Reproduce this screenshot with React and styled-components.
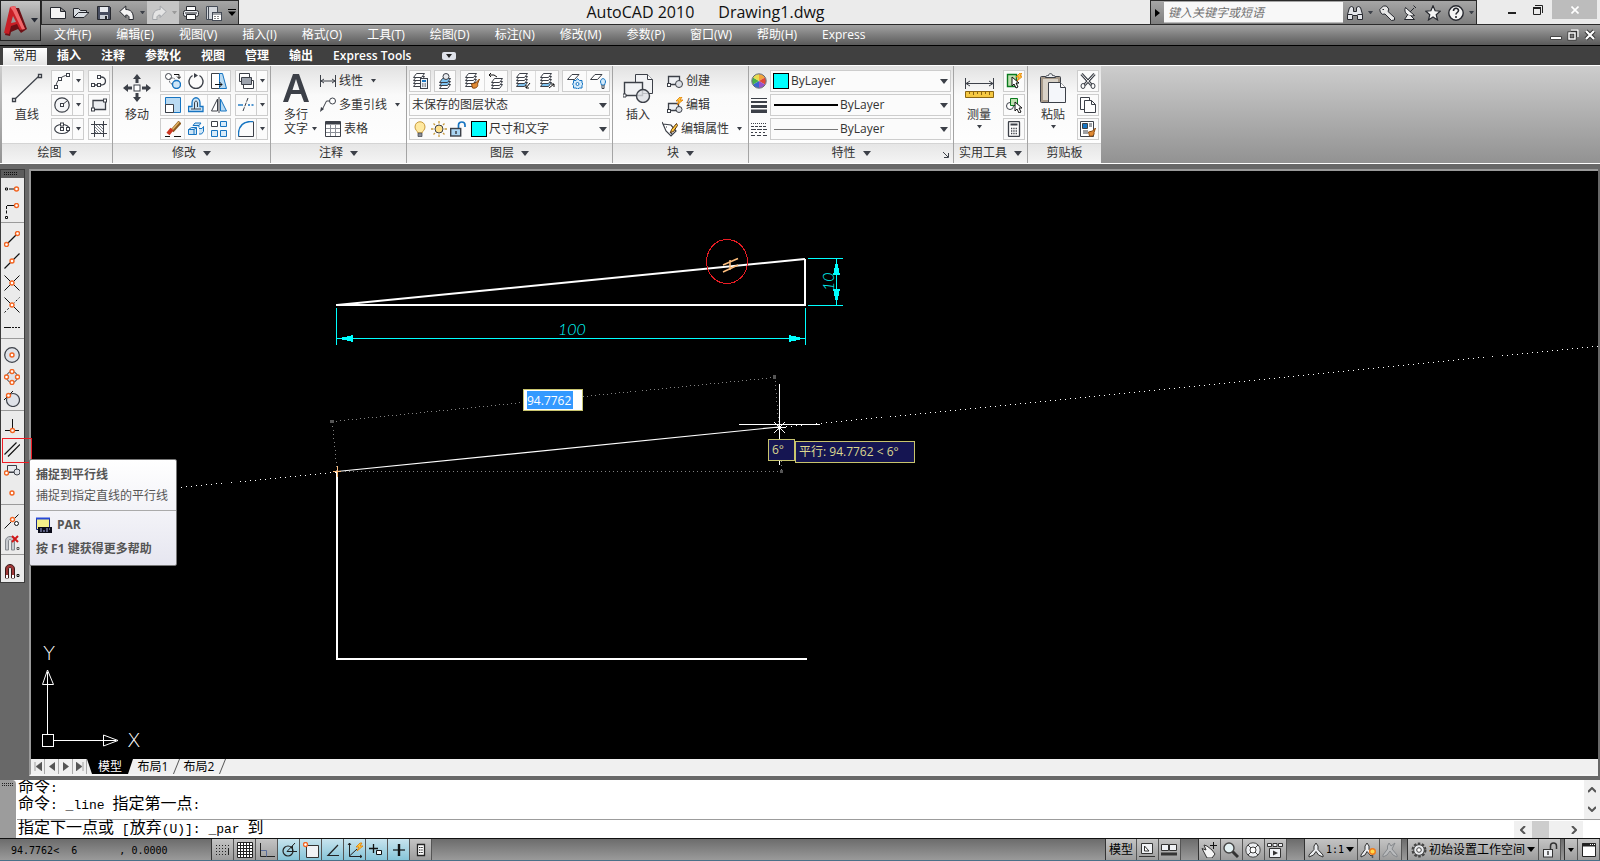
import * as React from "react"
import styled, { ThemeProvider, createGlobalStyle, css } from "styled-components";

const theme = {
    ink: '#3c4048',
    blue: '#1674c1',
    orange: '#f26522',
    cyan: '#00ffff',
    frame: '#686868',
    tip: '#151552',
    tipLine: '#c8c46e',
    ui: '"Open Sans", "Noto Sans CJK SC", sans-serif',
    mono: '"Liberation Mono", "Noto Sans CJK SC", monospace',
}

const INK = theme.ink
const BLUE = theme.blue
const ORANGE = theme.orange
const CYAN = theme.cyan

const GlobalStyle = createGlobalStyle`
    * {
        box-sizing: border-box;
    }

    body {
        margin: 0;
        background: #686868;
        font-family: ${theme.ui};
        font-size: 12px;
        line-height: 16px;
        color: #333;
    }

    button, input, select {
        margin: 0;
        padding: 0;
        border: 0;
        background: none;
        font: inherit;
        color: inherit;
    }

    svg {
        display: block;
        flex: none;
    }
`;

const sheet = (x, y, fill = '#fff') => (
    <path d={`M${x + 3.5} ${y - 0.5}h8l-3 4h-8z`} fill={fill} stroke={INK} />
)

const layers = (fill) => (
    <>
        {sheet(1, 10, fill)}
        {sheet(1, 7)}
        {sheet(1, 4)}
        {sheet(1, 1)}
    </>
)

const node = (x, y) => <circle cx={x} cy={y} r="2" fill="#fff" stroke={ORANGE} strokeWidth="1.4" />
const grip = (x, y) => <rect x={x - 1.5} y={y - 1.5} width="3" height="3" fill="#fff" stroke={INK} />
const cursor = (x, y) => <path d={`M${x} ${y}v9l2-2 2 4 2-1-2-4h3z`} fill="#fff" stroke="#111" />
const bolt = (x, y) => <path d={`M${x + 4} ${y}l-4 4h3l-2 4 6-5h-3l2-3z`} fill="#ffc83c" stroke="#e07800" strokeWidth=".8" />

const icons = {
    // quick access
    fresh: <path d="M.5 2.500h10l5 4v7h-15zM10.500 2.500v4h5" fill="#f4f4f4" stroke="#26282e" />,
    open: <path d="M.5 12.500v-9h5l2 2h6v2h2.500l-5 5zM.5 12.500l5-5h10" fill="#d9dde2" stroke="#26282e" />,
    save: <><path d="M1.500 1.500h12l1 1v12h-13z" fill="#474d60" stroke="#26282e" /><path d="M4 2h8v5H4z" fill="#e8ebf0" /><path d="M4 10h8v4H4z" fill="#c9ced6" /><path d="M9 11h2v3H9z" fill="#26282e" /></>,
    undo: <path d="M.8 6.500l6-5.500v3.500c5 0 8 3 7.500 10h-4.500c1-3-.5-4.500-3-4.500v2.500z" fill="#f4f4f4" stroke="#26282e" />,
    redo: <path d="M15.200 6.500l-6-5.500v3.500c-5 0-8 3-7.500 10h4.500c-1-3 .5-4.500 3-4.500v2.500z" fill="#e4e4e4" stroke="#a3a6aa" />,
    print: <><path d="M3.500 6.500v-5h9v5" fill="#fff" stroke="#26282e" /><rect x=".5" y="5.500" width="15" height="6" rx="2" fill="#e8eaee" stroke="#26282e" /><path d="M3.500 9.500h9v5h-9z" fill="#fff" stroke="#26282e" /><path d="M2 8h12" stroke="#26282e" /></>,
    publish: <><path d="M.5 1.500h11v13H.5z" fill="#d4d7dc" stroke="#444a55" /><path d="M2.500 1.500v13" stroke="#444a55" /><rect x="6.500" y="7.500" width="9" height="8" fill="#fff" stroke="#444a55" /><path d="M7 9h8" stroke="#444a55" /><path d="M8 11.500h6M8 13.500h6" stroke="#888" strokeDasharray="2 1" /></>,
    binoculars: <path d="M2.500 2.500l2-1 2 1v4h3v-4l2-1 2 1 2 7v5h-5v-4h-5v4h-5v-5zM.5 9.500h5M10.500 9.500h5" fill="#e4e6ea" stroke="#26282e" />,
    key: <path d="M.8 4.500l3.500-3.500h3l2.500 3-.8 2.500 6.500 6v2.500l-3 .5-6.500-6.500-2.700.3-2-2.300zM3.500 4.500h1.500" fill="#e6e6e6" stroke="#26282e" />,
    dish: <><path d="M3.500 2.500c-2.500 5 3 10 9 8zM8 7l4-4M11.500 .5l2.500 2.500" fill="#f0f0f0" stroke="#26282e" /><path d="M5.500 10l-3 4.500h10l-4-4" fill="#f0f0f0" stroke="#26282e" /></>,
    star: <path d="M8 .8l2.100 5 5.100.4-4 3.500 1.300 5.200L8 12l-4.500 2.900 1.300-5.200-4-3.500 5.100-.4z" fill="#f4f4f4" stroke="#26282e" strokeWidth="1.200" />,
    help: <><circle cx="8" cy="8" r="7.200" fill="#f4f4f4" stroke="#26282e" strokeWidth="1.400" /><path d="M5.500 6c0-3.500 5-3.500 5-.5 0 2-2.500 2-2.500 4M8 11v2" fill="none" stroke="#26282e" strokeWidth="1.600" /></>,

    // draw
    line: <><path d="M3 28L28 4" stroke={INK} strokeWidth="1.200" /><path d="M1.500 26.500h3v3h-3zM27.500 2.500h3v3h-3z" fill="#fff" stroke={INK} strokeWidth="1.300" /></>,
    arc: <><path d="M2 14C2 8 7 3 14 2" fill="none" stroke={INK} />{grip(2, 14)}{grip(6, 6)}{grip(14, 2)}</>,
    pline: <><path d="M2 12h8c6 0 6-8 0-8H9" fill="none" stroke={INK} strokeWidth="1.300" />{grip(2, 12)}{grip(8, 12)}{grip(8, 4)}</>,
    circle: <><circle cx="8" cy="8" r="7.200" fill="#f4f5f7" stroke={INK} strokeWidth="1.200" /><path d="M8 8l5-4" stroke={INK} />{grip(8, 8)}</>,
    rect: <><path d="M2 3.500h12.500v9H2z" fill="#eceef1" stroke={INK} strokeWidth="1.300" />{grip(2, 12.5)}{grip(14, 3.5)}</>,
    ellipse: <><ellipse cx="8" cy="8" rx="7.300" ry="4.500" fill="#fff" stroke={INK} strokeWidth="1.200" />{grip(8, 8)}{grip(8, 3.5)}{grip(14, 8)}</>,
    hatch: <><path d="M3.500 0v16M12.500 0v16M0 3.500h16M0 12.500h16" stroke={INK} /><path d="M4 6l6 6M4 9l3 3M5 4l7 7M8 4l4 4M4 11l1 1M11 4l1 1" stroke="#80848c" /></>,

    // modify
    move: <><path d="M15 1l4 5h-2.500v4h-3V6H11zM15 29l4-5h-2.500v-4h-3v4H11zM1 15l5-4v2.500h4v3H6V19zM29 15l-5-4v2.500h-4v3h4V19z" fill={INK} /><rect x="12" y="12" width="6" height="6" fill="#fff" stroke={INK} /></>,
    copy: <><circle cx="3.500" cy="3.500" r="3" fill="#fff" stroke={INK} /><circle cx="7.500" cy="8" r="3" fill="none" stroke={INK} strokeDasharray="1.500 1" /><circle cx="11.500" cy="11.500" r="4" fill="#cfe6f7" stroke={BLUE} strokeWidth="1.400" /><path d="M9 1.500h5v4M12 3.500l2 2 2-2" fill="none" stroke="#111" /></>,
    rotate: <><path d="M4.500 2.500a7 7 0 1 0 7 0" fill="none" stroke={INK} strokeWidth="1.400" /><path d="M6 0v5l4-2.500z" fill={INK} /></>,
    stretch: <><path d="M.5 .5h8v15h-8z" fill="#fff" stroke={INK} /><path d="M8.500 .5h3l4 15h-7z" fill="#b9daf2" stroke={BLUE} /><path d="M4 11.500h7M8.500 9l2.500 2.500L8.500 14" fill="none" stroke="#111" /></>,
    scale: <><path d="M.5 .5h15v15H.5z" fill="#b9daf2" stroke={BLUE} /><path d="M.5 7.500h8v8h-8z" fill="#fff" stroke={INK} /></>,
    offset: <><path d="M.5 14.500h14.500v-5h-3V6c0-7-8-7-8 0v3.500h-3.500z" fill="#cfe6f7" stroke={BLUE} strokeWidth="1.300" /><path d="M3 12h10M6.500 12V6c0-2.500 3-2.500 3 0v4" fill="none" stroke={INK} /></>,
    mirror: <><path d="M6.500 2v12h-6z" fill="#fff" stroke={INK} /><path d="M9.500 2v12h6z" fill="#b9daf2" stroke={BLUE} /><path d="M8 0v16" stroke={INK} /></>,
    erase: <><path d="M15 1l-8 9" stroke="#8a5a20" strokeWidth="4" /><path d="M14 1l-7 8" stroke="#e0b060" strokeWidth="1.500" /><path d="M7 8L3 13" stroke="#cc3520" strokeWidth="4" /><path d="M0 15.500h5M9 15.500h7" stroke="#111" /></>,
    explode: <path d="M.5 8.500l3-2h5v7h-8zM.5 8.500h5.500v5M6 8.500l2.500-2M5 4.500l2-2.500h6l-2 2.500v2M5 4.500h6M11 7.500h3l1.500-2v5l-2 2.500h-2.500" fill="#cfe6f7" stroke={BLUE} />,
    array: <><path d="M.5 .5h6v5h-6z" fill="#fff" stroke={INK} /><path d="M9.500 .5h6v5h-6zM.5 9.500h6v6h-6zM9.500 9.500h6v6h-6z" fill="#d8ebf9" stroke={BLUE} /></>,
    order: <><path d="M1.500 .5h10v8h-10z" fill="#fff" stroke={INK} /><path d="M5.500 7.500h10v8h-10z" fill="#fff" stroke={INK} /><path d="M3.500 4.500h10v7h-10z" fill="#9da3ad" stroke={INK} /></>,
    trim: <><path d="M0 8h5" stroke={BLUE} strokeWidth="1.400" /><path d="M10 8h6" stroke={BLUE} strokeWidth="1.400" strokeDasharray="2 1.500" /><path d="M5 14L10 1" stroke={INK} strokeDasharray="4 1" /></>,
    fillet: <><path d="M.5 15.500V12C1 5 5 1 12 .5h3" fill="none" stroke={BLUE} strokeWidth="1.400" /><path d="M15.500 .5v15H.5" fill="none" stroke={INK} /></>,

    // annotation
    mtext: <path d="M0 28L10 0h6l10 28h-5l-3-8H8l-3 8zM9.500 16h7L13 5z" fill={INK} fillRule="evenodd" />,
    linear: <path d="M.5 2v12M15.500 2v12M1 8h14M4 6L1 8l3 2M12 6l3 2-3 2" fill="none" stroke={INK} />,
    leader: <><circle cx="12.500" cy="4" r="3" fill="#fff" stroke={INK} /><path d="M9.500 4H6.500L2 13" fill="none" stroke={INK} /><path d="M0 15l1-5 3 2z" fill={INK} /></>,
    table: <><path d="M.5 .5h15v15H.5z" fill="#fff" stroke={INK} /><path d="M1 2h14" stroke={INK} strokeWidth="3" /><path d="M1 7.500h14M1 11.500h14M5.500 4v11M10.500 4v11" stroke="#8a8e96" /></>,

    // layers
    layerProps: <>{layers()}<rect x="8.500" y="5.500" width="7" height="10" fill="#eef4fa" stroke={INK} /><path d="M10 8h4" stroke={BLUE} strokeWidth="2" /><path d="M10 11h4M10 13h4" stroke={INK} strokeDasharray="1 .5" /></>,
    layerMatch: <>{sheet(2, 12)}{sheet(2, 9, '#7fc3f0')}{sheet(2, 6, '#7fc3f0')}<circle cx="9" cy="3.500" r="3" fill="#e8eaee" stroke={INK} /></>,
    layerBrush: <>{layers()}<path d="M15.500 6l-4 4-4 1 1 4c4 1 6-2 5-4z" fill="#e08a34" stroke="#8a4a10" /></>,
    layerPrev: <>{sheet(3, 12)}{sheet(3, 9)}{sheet(3, 6)}<path d="M6 2H1M3 0L1 2l2 2M6 2l3 2" fill="none" stroke="#111" /></>,
    layerIso: <>{layers('#7fc3f0')}<path d="M15 10l-4 5M11 12v3h3" fill="none" stroke="#111" /></>,
    layerUniso: <>{layers('#7fc3f0')}<path d="M10 15l5-4M12 11h3v3" fill="none" stroke="#111" /></>,
    layerFreeze: <><path d="M.5 6.500h7l4.500-5H5z" fill="#fff" stroke={INK} /><path d="M10.500 5.500l2 2h2.500v2.500l1 1-1 1.500v2.500h-2.500l-2 1-1.500-1H6.500v-2.500l-1-1.500 1-1V7.500h2.500z" fill="#d4eafa" stroke={BLUE} /><circle cx="10.500" cy="11" r="1.500" fill="#fff" stroke={BLUE} /></>,
    layerOff: <><path d="M.5 6.500h7l4.500-5H5z" fill="#fff" stroke={INK} /><path d="M10.500 9c0-4.500 5-4.500 5 0 0 1-1 2-1 3h-3c0-1-1-2-1-3z" fill="#d4eafa" stroke={BLUE} /><path d="M12 12v3.500h2V12" fill="none" stroke={INK} /></>,
    bulb: <><path d="M3 6c0-7 10-7 10 0 0 3-2.500 4-3 6H6C5.500 10 3 9 3 6z" fill="#ffe9a0" stroke="#c89a3c" /><path d="M6 12h4v3.500H6z" fill="#8a8e96" stroke={INK} strokeWidth=".7" /></>,
    sun: <><circle cx="8" cy="8" r="4" fill="#ffe08a" stroke={INK} /><path d="M8 0v2.500M8 13.500V16M0 8h2.500M13.500 8H16M2.500 2.500L4 4M12 12l1.500 1.500M2.500 13.500L4 12M12 4l1.500-1.500" stroke="#c89a3c" strokeWidth="1.300" /></>,
    unlock: <><path d="M8.500 7V4c0-4 6.500-4 6.500 0v2" fill="none" stroke={BLUE} strokeWidth="1.700" /><rect x=".7" y="7.500" width="10" height="7.500" fill="#a9d4f2" stroke={INK} strokeWidth="1.400" /><path d="M6 10v3" stroke={INK} strokeWidth="1.500" /></>,

    // block
    insert: <><path d="M12.500 1.500h12l5 5v14h-17z" fill="#f2f3f5" stroke={INK} /><path d="M24.500 1.500v5h5" fill="#fff" stroke={INK} /><path d="M1.500 9.500h18v13h-18z" fill="#f2f3f5" stroke={INK} strokeWidth="1.400" /><circle cx="20" cy="23" r="6.500" fill="#dde0e5" fillOpacity=".8" stroke={INK} strokeWidth="1.400" /><path d="M0 21h3v3H0z" fill="#fff" stroke={INK} /></>,
    create: <><path d="M1.500 3.500h11v8h-11z" fill="#eef0f3" stroke={INK} strokeWidth="1.300" /><circle cx="12" cy="11" r="3.500" fill="#dde0e5" stroke={INK} />{grip(2, 12)}</>,
    edit: <><path d="M1.500 6.500h10v7h-10z" fill="#eef0f3" stroke={INK} strokeWidth="1.300" /><circle cx="12" cy="12.500" r="3" fill="#dde0e5" stroke={INK} />{bolt(9, 0)}{grip(2, 14)}</>,
    editAttr: <><path d="M1 3l8 1 5 6-5 5-5-5zM1 3L0 1M4 6h1M8 11l2 2" fill="#fff" stroke={INK} strokeWidth="1.200" /><path d="M14.500 2.500l-5 6-1 3 3-1 4-6z" fill="#ffc83c" stroke="#5a3410" /></>,

    // properties
    lweight: <><path d="M0 1.500h16" stroke={INK} /><path d="M0 5h16" stroke={INK} strokeWidth="2" /><path d="M0 9.500h16" stroke={INK} strokeWidth="3" /><path d="M0 14.500h16" stroke={INK} strokeWidth="4" /></>,
    ltype: <><path d="M0 2.500h16" stroke={INK} strokeDasharray="1 1" /><path d="M0 5.500h16" stroke={INK} strokeDasharray="3 1" /><path d="M0 8.500h16" stroke={INK} strokeDasharray="5 1" /><path d="M0 11.500h16" stroke={INK} strokeDasharray="2 2" /><path d="M0 14.500h16" stroke={INK} strokeDasharray="4 2" /></>,
    wheel: <><path d="M8 8L8 1A7 7 0 0 1 14 4.500z" fill="#f2a33c" /><path d="M8 8l6-3.500A7 7 0 0 1 14 11.500z" fill="#e04838" /><path d="M8 8l6 3.500A7 7 0 0 1 8 15z" fill="#9a50c8" /><path d="M8 8v7A7 7 0 0 1 2 11.500z" fill="#3a66d0" /><path d="M8 8l-6 3.500A7 7 0 0 1 2 4.500z" fill="#48b048" /><path d="M8 8L2 4.500A7 7 0 0 1 8 1z" fill="#e8dc50" /><circle cx="8" cy="8" r="7.200" fill="none" stroke="#666a72" /></>,

    // utilities
    measure: <><path d="M1.500 1v11M29.500 1v11M2 6.500h27M6 4L2 6.500 6 9M25 4l4 2.500L25 9" fill="none" stroke={INK} /><path d="M1.500 14.500h28v6h-28z" fill="#f5c842" stroke="#8a6410" /><path d="M5.500 15v2M9.500 15v3M13.500 15v2M17.500 15v3M21.500 15v2M25.500 15v3" stroke="#8a6410" /></>,
    quickSelect: <><path d="M1.500 1.500h9v12h-9z" fill="#bfe0b0" stroke="#0a7a1e" strokeWidth="1.400" />{bolt(10, 0)}{cursor(6, 4)}</>,
    selectAll: <><circle cx="4" cy="9" r="3.500" fill="#fff" stroke={INK} /><path d="M4.500 1.500h7v7h-7z" fill="#bfe0b0" stroke="#0a7a1e" />{cursor(9, 5)}</>,
    calc: <><rect x="2.500" y=".5" width="11" height="15" rx="1" fill="#fff" stroke={INK} strokeWidth="1.300" /><path d="M4.500 3.500h7" stroke={INK} strokeWidth="2" /><path d="M5 7.500h6M5 10h6M5 12.500h6" stroke={INK} strokeWidth="1.300" strokeDasharray="1.300 1" /></>,

    // clipboard
    paste: <><rect x="2.500" y="3.500" width="20" height="26" rx="1" fill="#a79a8a" stroke={INK} /><path d="M5 6h15v21H5z" fill="#d8d2c8" /><path d="M7.500 4.500c0-2 2-2 3-2 0-2.500 4-2.500 4 0 1 0 3 0 3 2z" fill="#eceef1" stroke={INK} /><path d="M10.500 9.500h12l5 5v15h-17z" fill="#f4f6fa" stroke={INK} /><path d="M22.500 9.500v5h5" fill="#fff" stroke={INK} /></>,
    cut: <><path d="M1.500 1l10 11M14.500 1l-10 11" stroke={INK} strokeWidth="3" /><path d="M1.500 1l10 11M14.500 1l-10 11" stroke="#f4f4f4" /><ellipse cx="3" cy="13" rx="2" ry="2.500" fill="#fff" stroke={INK} /><ellipse cx="13" cy="13" rx="2" ry="2.500" fill="#fff" stroke={INK} /></>,
    copyClip: <><path d="M.5 .5h9v12h-9z" fill="#fff" stroke={INK} /><path d="M4.500 3.500h7l4 4v8h-11zM11.500 3.500v4h4" fill="#fff" stroke={INK} /></>,
    matchProp: <><path d="M.5 .5h13v15H.5z" fill="#fff" stroke={INK} /><path d="M2.500 2.500h5v5h-5z" fill={BLUE} stroke={INK} /><path d="M9 3h3M9 5h3M3 10h5M3 12h5" stroke={INK} /><path d="M15.500 7l-3 3-4 1 1 4c4 1 5-2 4.500-3.500z" fill="#e08a34" stroke="#8a4a10" /></>,

    // object snaps
    snapTrack: <><path d="M5 8h6" stroke="#111" /><path d="M1.500 7h2v2h-2z" fill="#fff" stroke="#111" />{node(12.500, 8)}</>,
    snapFrom: <><path d="M3 2.500h8" stroke="#111" /><path d="M2.500 3v8" stroke="#111" strokeDasharray="3 1.500" /><path d="M1.500 13.500h2v2h-2z" fill="#fff" stroke="#111" />{node(12.500, 2.500)}</>,
    snapEnd: <><path d="M3 13L13 3" stroke="#111" strokeWidth="1.300" />{node(2.500, 13.500)}{node(13.500, 2.500)}</>,
    snapMid: <><path d="M.5 15.500l15-15" stroke="#111" strokeWidth="1.200" />{node(8, 8)}</>,
    snapInt: <><path d="M.5 15.500l15-15M.5 .5l15 15" stroke="#111" />{node(8, 8)}</>,
    snapApp: <><path d="M.5 .5l15 15" stroke="#111" /><path d="M.5 15.500l15-15" stroke="#111" strokeDasharray="2 2" />{node(8, 8)}</>,
    snapExt: <><path d="M0 8.500h7" stroke="#111" /><path d="M8 8.500h8" stroke="#111" strokeDasharray="2 1" /></>,
    snapCen: <><circle cx="8" cy="8" r="7.300" fill="#dfe2e8" stroke={INK} strokeWidth="1.200" />{node(8, 8)}</>,
    snapQua: <><circle cx="8" cy="8" r="5.500" fill="#dfe2e8" stroke={INK} />{node(8, 2.500)}{node(8, 13.500)}{node(2.500, 8)}{node(13.500, 8)}</>,
    snapTan: <><circle cx="9" cy="9" r="6.500" fill="#dfe2e8" stroke={INK} strokeWidth="1.200" /><path d="M0 9L9 0" stroke="#111" />{node(4.500, 4.500)}</>,
    snapPer: <><path d="M8.500 0v10M1 11.500h14" stroke="#111" />{node(8.500, 11.500)}</>,
    snapPar: <path d="M.5 13.500l12-12M4 15.500l12-12" stroke="#111" strokeWidth="1.200" />,
    snapIns: <><path d="M3.500 2.500h9v7h-9z" fill="#e8eaee" stroke={INK} /><circle cx="13" cy="9" r="3" fill="#dfe2e8" stroke={INK} /><path d="M5 9h5" stroke={INK} />{node(2.500, 10)}</>,
    snapNod: node(8, 8),
    snapNea: <><path d="M.5 15.500l14-14" stroke="#111" /><circle cx="12.500" cy="10.500" r="2" fill="#fff" stroke="#111" />{node(8.500, 6.500)}</>,
    snapNone: <><path d="M1.500 15V6c0-6 9-6 9 0v9h-3V6c0-2-3-2-3 0v9z" fill="#c6c9ce" stroke="#85898f" /><path d="M8 1l6 6M14 1L8 7" stroke="#d01818" strokeWidth="2" /><path d="M13 12.500h2v2h-2z" fill="#fff" stroke="#555" /></>,
    snapSet: <><path d="M1.500 15V6c0-6 9-6 9 0v9h-3V6c0-2-3-2-3 0v9z" fill="#a03838" stroke="#3a1a1a" /><path d="M2 12h2v3H2zM8 12h2v3H8z" fill="#fff" /><path d="M13 11.500h2v2h-2z" fill="#fff" stroke="#111" /></>,

    // status bar
    dots: <><path d="M1 3.500h10M1 6.500h10M1 9.500h10M1 12.500h10" stroke="#222" strokeDasharray="1 2" /><path d="M13.500 3v1M13.500 6v7" stroke="#222" /></>,
    grid: <path d="M.5 .5h15v15H.5zM3.500 0v16M6.500 0v16M9.500 0v16M12.500 0v16M0 3.500h16M0 6.500h16M0 9.500h16M0 12.500h16" fill="#fff" stroke="#222" />,
    ortho: <><path d="M1.500 1v13.500H16" fill="none" stroke="#222" /><path d="M2 8.500h5.500v6" fill="none" stroke="#5a6c9a" /></>,
    polar: <><circle cx="7" cy="9" r="5" fill="none" stroke="#222" strokeWidth="1.200" /><path d="M6 9.500h10M6 9.500L14 1M11.500 4v5" fill="none" stroke="#222" /></>,
    osnap: <><path d="M3.500 3.500h12v12h-12z" fill="#f0f2f5" stroke="#333" />{node(2.500, 2.500)}</>,
    otrack: <path d="M13 3L3 13.500h11" fill="none" stroke="#222" strokeWidth="1.200" />,
    ducs: <><path d="M2.500 1v13.500H15M2.500 14L10 7M1 3l1.500-2L4 3M13 13l2 1.500L13 16" fill="none" stroke="#222" />{bolt(9, 1)}</>,
    dyn: <><path d="M0 6.500h9M4.500 2v9" stroke="#111" strokeWidth="1.300" /><path d="M7.500 8.500h5v4h-5z" fill="#fff" stroke="#111" /></>,
    lwt: <><path d="M2 8h12" stroke="#111" strokeWidth="1.200" /><path d="M8 2v12" stroke="#111" strokeWidth="2.400" /></>,
    qp: <><path d="M4.500 2.500h7v11h-7z" fill="#fff" stroke="#222" strokeWidth="1.300" /><path d="M6 5.500h4M6 8h4M6 10.500h4" stroke="#222" strokeDasharray="1.500 .7" /></>,
    layout: <><path d="M2.500 1.500h11v10h-11z" fill="#f0f2f5" stroke="#333" /><path d="M5.500 4v5h4.500z" fill="#fff" stroke="#333" /><path d="M0 14.500h16" stroke="#333" /></>,
    views: <><path d="M.5 2.500h7v6h-7zM8.500 2.500h7v6h-7z" fill="#f0f2f5" stroke="#333" /><path d="M0 12h16" stroke="#333" strokeWidth="3" /></>,
    pan: <><path d="M1 6.500l4 1.500-2-5 3 1 5 4 3 4-3 4H6z" fill="#f4f4f4" stroke="#333" /><path d="M12.500 0v7M9 3.500h7" stroke="#111" /></>,
    zoom: <><path d="M9 9l6 6" stroke="#333" strokeWidth="3" /><circle cx="6" cy="6" r="5" fill="#e4f2f4" stroke="#444" strokeWidth="1.400" /></>,
    steer: <><circle cx="8" cy="8" r="7.200" fill="#eceef1" stroke="#444" /><circle cx="8" cy="8" r="3" fill="#fff" stroke="#444" /><path d="M3 3l3 3M13 3l-3 3M3 13l3-3M13 13l-3-3" stroke="#444" /></>,
    motion: <><path d="M.5 1.500h4v3h-4zM6 1.500h4v3H6zM11.500 1.500h4v3h-4zM2.500 6.500h11v9h-11z" fill="#f0f2f5" stroke="#333" /><path d="M6 8.500v5l5-2.500z" fill="#333" /></>,
    anno: <path d="M8 1l2 3v3.500l5 5.500v2l-4.500-2L8 9.500 5.500 13 1 15v-2l5-5.500V4z" fill="#eceef1" stroke="#333" />,
    annoSun: <><path d="M7 1l2 3v3.500l4 5-2 1.500-4-4.500L5 13l-4 2v-2l4-5.500V4z" fill="#eceef1" stroke="#333" /><circle cx="12.500" cy="9.500" r="2.800" fill="#ffd94a" stroke="#ee7a1c" strokeWidth="1.400" /><path d="M12.500 13v3" stroke="#555" strokeWidth="1.500" /></>,
    annoAuto: <path d="M7 1l2 3 4-3-3 6 5 6v2l-4-2-3-4-3 4-4 2v-2l4.500-6V4z" fill="#b9bbbd" stroke="#85888c" />,
    gear: <><circle cx="8" cy="8" r="6.300" fill="none" stroke="#444" strokeWidth="2.400" strokeDasharray="2.500 1.460" /><circle cx="8" cy="8" r="5.300" fill="#e8eaed" stroke="#444" /><circle cx="8" cy="8" r="2.300" fill="#fff" stroke="#444" /></>,
    padlock: <><path d="M8.500 7V4c0-4 6-4 6 0v3" fill="none" stroke="#333" strokeWidth="1.500" /><rect x="1.500" y="7.500" width="9" height="7.500" fill="#f0f2f5" stroke="#333" /><path d="M6 9v4" stroke="#333" strokeWidth="1.400" /></>,
    clean: <><path d="M1.500 1.500h13v13h-13z" fill="#fff" stroke="#222" /><path d="M1 3h14" stroke="#222" strokeWidth="3" /><path d="M9 2.500h5" stroke="#fff" strokeDasharray="1 1" /></>,
    par: <><path d="M.5 1.500h13v11H.5z" fill="#f6f08a" stroke="#1a2a88" /><path d="M0 1.500h14" stroke="#2748d8" strokeWidth="2" /><path d="M2 10h14v6H2z" fill="#0c0c18" /><path d="M4 12h3M4 14h9M10 12h4" stroke="#a8b0e8" strokeDasharray="2 1" /></>,
}

const Icon = ({ name, w = 16, h = w }) => (
    <svg width={w} height={h} viewBox={`0 0 ${w} ${h}`} fill="none" aria-hidden="true">{icons[name]}</svg>
)

const Caret = ({ w = 6, color = INK }) => (
    <svg width={w} height={w / 2 + 1} viewBox="0 0 8 5" preserveAspectRatio="none" aria-hidden="true">
        <path d="M0 0h8L4 5z" fill={color} />
    </svg>
)

const menus = ['文件(F)', '编辑(E)', '视图(V)', '插入(I)', '格式(O)', '工具(T)', '绘图(D)', '标注(N)', '修改(M)', '参数(P)', '窗口(W)', '帮助(H)', 'Express']

const ribbonTabs = ['常用', '插入', '注释', '参数化', '视图', '管理', '输出', 'Express Tools']

const snapGroups = [
    [['snapTrack', '临时追踪点'], ['snapFrom', '捕捉自']],
    [['snapEnd', '捕捉到端点'], ['snapMid', '捕捉到中点'], ['snapInt', '捕捉到交点'], ['snapApp', '捕捉到外观交点'], ['snapExt', '捕捉到延长线']],
    [['snapCen', '捕捉到圆心'], ['snapQua', '捕捉到象限点'], ['snapTan', '捕捉到切点']],
    [['snapPer', '捕捉到垂足'], ['snapPar', '捕捉到平行线'], ['snapIns', '捕捉到插入点'], ['snapNod', '捕捉到节点']],
    [['snapNea', '捕捉到最近点'], ['snapNone', '无捕捉']],
    [['snapSet', '对象捕捉设置']],
]

const modes = [
    ['dots', '捕捉', false], ['grid', '栅格', false], ['ortho', '正交', false], ['polar', '极轴', true], ['osnap', '对象捕捉', true],
    ['otrack', '对象追踪', true], ['ducs', 'DUCS', true], ['dyn', 'DYN', true], ['lwt', '线宽', true], ['qp', 'QP', false],
]

const Tool = ({ icon, label, split }) => (
    <ToolBox>
        <ToolButton aria-label={label}><Icon name={icon} /></ToolButton>
        {split && <SplitButton aria-label={`${label} 更多`}><Caret w={5} /></SplitButton>}
    </ToolBox>
)

const ToolPair = ({ items }) => (
    <ToolBox>
        {items.map(([icon, label]) => (
            <ToolButton key={icon} $joined aria-label={label}><Icon name={icon} /></ToolButton>
        ))}
    </ToolBox>
)

const Panel = ({ title, width, launcher, plain, children }) => (
    <PanelBox $width={width}>
        <PanelBody>{children}</PanelBody>
        <PanelTitle>
            {title}
            {!plain && <Caret w={8} />}
            {launcher && (
                <Launcher aria-label="特性选项板">
                    <svg width="6" height="6" viewBox="0 0 6 6"><path d="M0 0l5 5M5.500 1v4.500H1" fill="none" stroke={INK} /></svg>
                </Launcher>
            )}
        </PanelTitle>
    </PanelBox>
)

const Combo = ({ label, value, children }) => (
    <ComboBox>
        {children}
        <ComboSelect aria-label={label} defaultValue={value}>
            <option>{value}</option>
        </ComboSelect>
        <Caret w={8} />
    </ComboBox>
)

// full-width characters take 16px, half-width ones 8px
const ConsoleText = ({ text }) => (
    <ConsoleLine>
        {text.split(/([\x20-\x7e]+)/).map((part, i) => (
            i % 2 ? <Half key={i}>{part}</Half> : part
        ))}
    </ConsoleLine>
)

const Drawing = () => (
    <DrawingSvg aria-label="Drawing1.dwg">
        <g transform="translate(-31 -171)" fill="none" shapeRendering="crispEdges">
            <g stroke="#fff" strokeWidth="2">
                <path d="M336 305h470M805 259v47" />
                <path d="M337 305L805 259" shapeRendering="auto" />
                <path d="M337 472v187h470" />
            </g>

            <g stroke={CYAN}>
                <path d="M336.500 308v37M805.500 308v37M337 338.500h468" />
                <path d="M808 258.500h35M808 305.500h35M836.500 259v46" />
            </g>
            <g fill={CYAN}>
                <path d="M338 338.500l15-3.500v7zM805 338.500l-16-3.500v7z" />
                <path d="M836.500 259l-3.500 16h7zM836.500 305l-3.500-16h7z" />
            </g>
            <DimText x="558" y="335">100</DimText>
            <DimText x="0" y="0" transform="translate(834 291) rotate(-90)">10</DimText>

            <ellipse cx="727" cy="261.500" rx="20.500" ry="22" stroke="#e81c24" />
            <path d="M723 265l15-6.500M723 272l15-7M730 260v10" stroke="#ffbe7d" strokeWidth="1.500" shapeRendering="auto" />

            <path d="M786 427L1598 346" stroke="#fff" strokeDasharray="1 4" />
            <path d="M336 472L176 488" stroke="#fff" strokeDasharray="1 4" />
            <path d="M337 471.500L779 427" stroke="#fff" strokeWidth="1.200" shapeRendering="auto" />

            <g stroke="#808080" strokeDasharray="1 3">
                <path d="M332 421.500L775 377.500M332.500 422l4.500 50M775 377l7 94M337 471.500h445" />
            </g>
            <path d="M330 420h4v3h-4zM773 375h3v4h-3zM780 470h3v3h-3z" fill="#555" />
            <path d="M337.500 466v11M333 471.500h8" stroke="#ffbe7d" />

            <path d="M779.500 384v81M739 424.500h81" stroke="#fff" />
            <path d="M774 422l11 11M785 422l-11 11M773 427.500h13" stroke="#fff" shapeRendering="auto" />

            <g stroke="#fff">
                <path d="M42.500 734.500h11v12h-11zM47.500 734v-50M54 740.500h49" />
                <path d="M47.500 670l-5 14.500h11zM47.500 672v12M118 740.500l-14.500-5.500v11zM104 740.500h12" shapeRendering="auto" />
            </g>
            <AxisText x="43" y="660">Y</AxisText>
            <AxisText x="127" y="747">X</AxisText>
        </g>
    </DrawingSvg>
)

const App = () => {
    return (
        <ThemeProvider theme={theme}>
            <GlobalStyle />
            <Window>
                <Header>
                    <AppButton aria-label="应用程序菜单">
                        <svg width="24" height="32" viewBox="0 0 24 32" aria-hidden="true">
                            <path d="M1 30L7 3l8 0 8 21-6 4-3-4-7 3-1 4z" fill="#6d1015" />
                            <path d="M0 28L6 2l5-1 10 23-5 1-3-6-6 2-2 8z" fill="#c81f26" />
                            <path d="M6 2l5-1 10 23-3 .5L9 6z" fill="#f0686c" />
                            <path d="M9 11l3 6-5 1z" fill="#9a9a9a" />
                        </svg>
                        <Caret w={7} color="#262a34" />
                    </AppButton>
                    <HeaderRows>
                        <TitleBar>
                            <QuickAccess>
                                <BarButton aria-label="新建"><Icon name="fresh" /></BarButton>
                                <BarButton aria-label="打开"><Icon name="open" /></BarButton>
                                <BarButton aria-label="保存"><Icon name="save" /></BarButton>
                                <BarButton aria-label="放弃"><Icon name="undo" /></BarButton>
                                <SlimButton aria-label="放弃列表"><Caret w={5} /></SlimButton>
                                <BarButton aria-label="重做" $pale disabled><Icon name="redo" /></BarButton>
                                <SlimButton aria-label="重做列表" $pale disabled><Caret w={5} color="#9a9a9a" /></SlimButton>
                                <BarButton aria-label="打印"><Icon name="print" /></BarButton>
                                <BarButton aria-label="发布"><Icon name="publish" /></BarButton>
                                <EndButton aria-label="自定义快速访问工具栏">
                                    <svg width="8" height="7" viewBox="0 0 8 7"><path d="M0 0h8v1H0zM0 2.500h8L4 7z" fill="#000" /></svg>
                                </EndButton>
                            </QuickAccess>
                            <Caption>
                                <span>AutoCAD 2010</span>
                                <span>Drawing1.dwg</span>
                            </Caption>
                            <InfoCenter>
                                <EndButton aria-label="折叠搜索">
                                    <svg width="5" height="8" viewBox="0 0 5 8"><path d="M0 0l5 4-5 4z" fill="#000" /></svg>
                                </EndButton>
                                <SearchInput aria-label="搜索" placeholder="键入关键字或短语" />
                                <BarButton aria-label="搜索"><Icon name="binoculars" /></BarButton>
                                <SlimButton aria-label="搜索选项"><Caret w={5} /></SlimButton>
                                <BarButton aria-label="速博应用中心"><Icon name="key" /></BarButton>
                                <BarButton aria-label="通讯中心"><Icon name="dish" /></BarButton>
                                <BarButton aria-label="收藏夹"><Icon name="star" /></BarButton>
                                <BarButton aria-label="帮助"><Icon name="help" /></BarButton>
                                <SlimButton aria-label="帮助选项"><Caret w={5} /></SlimButton>
                            </InfoCenter>
                            <WindowButtons>
                                <WindowButton aria-label="最小化">
                                    <svg width="8" height="10" viewBox="0 0 8 10"><path d="M0 7h8v2H0z" fill="#222" /></svg>
                                </WindowButton>
                                <WindowButton aria-label="还原">
                                    <svg width="10" height="10" viewBox="0 0 10 10"><path d="M.5 2.500h7v7h-7zM2 .5h7.500V8" fill="none" stroke="#222" /><path d="M0 3h8" stroke="#222" strokeWidth="2" /></svg>
                                </WindowButton>
                                <WindowButton aria-label="关闭" $close>
                                    <svg width="8" height="8" viewBox="0 0 8 8"><path d="M.5 .5l7 7M7.500 .5l-7 7" stroke="#fff" strokeWidth="1.600" /></svg>
                                </WindowButton>
                            </WindowButtons>
                        </TitleBar>
                        <MenuBar>
                            {menus.map(name => <MenuItem key={name}>{name}</MenuItem>)}
                            <DocButtons>
                                <button aria-label="最小化图形">
                                    <svg width="12" height="12" viewBox="0 0 12 12"><path d="M.5 7.500h11v3H.5z" fill="#fff" stroke="#444" /></svg>
                                </button>
                                <button aria-label="还原图形">
                                    <svg width="12" height="12" viewBox="0 0 12 12"><path d="M4 1h7v7M2 4h6v6H2z" fill="none" stroke="#333" strokeWidth="3" /><path d="M4 1h7v7M2 4h6v6H2z" fill="none" stroke="#fff" strokeWidth="1.500" /></svg>
                                </button>
                                <button aria-label="关闭图形">
                                    <svg width="12" height="12" viewBox="0 0 12 12"><path d="M2 2l8 8M10 2l-8 8" stroke="#333" strokeWidth="4" /><path d="M2 2l8 8M10 2l-8 8" stroke="#fff" strokeWidth="2.200" /></svg>
                                </button>
                            </DocButtons>
                        </MenuBar>
                    </HeaderRows>
                </Header>

                <TabStrip>
                    {ribbonTabs.map((name, i) => <RibbonTab key={name} $active={i === 0}>{name}</RibbonTab>)}
                    <RibbonToggle aria-label="最小化功能区"><Caret w={6} color="#222" /></RibbonToggle>
                </TabStrip>

                <Ribbon>
                    <Panel title="绘图" width={111}>
                        <BigButton $width={51}><BigIcon><Icon name="line" w={32} /></BigIcon>直线</BigButton>
                        <ToolColumn>
                            <Tool icon="arc" label="圆弧" split />
                            <Tool icon="circle" label="圆" split />
                            <Tool icon="ellipse" label="椭圆" split />
                        </ToolColumn>
                        <ToolColumn>
                            <Tool icon="pline" label="多段线" />
                            <Tool icon="rect" label="矩形" />
                            <Tool icon="hatch" label="图案填充" />
                        </ToolColumn>
                    </Panel>

                    <Panel title="修改" width={158}>
                        <BigButton $width={50}><BigIcon><Icon name="move" w={30} /></BigIcon>移动</BigButton>
                        <ToolColumn>
                            <ToolPair items={[['copy', '复制'], ['rotate', '旋转'], ['stretch', '拉伸']]} />
                            <ToolPair items={[['scale', '缩放'], ['offset', '偏移'], ['mirror', '镜像']]} />
                            <ToolPair items={[['erase', '删除'], ['explode', '分解'], ['array', '阵列']]} />
                        </ToolColumn>
                        <ToolColumn>
                            <Tool icon="order" label="绘图次序" split />
                            <Tool icon="trim" label="修剪" split />
                            <Tool icon="fillet" label="圆角" split />
                        </ToolColumn>
                    </Panel>

                    <Panel title="注释" width={136}>
                        <BigButton $width={48}>
                            <BigIcon><Icon name="mtext" w={26} h={28} /></BigIcon>
                            多行
                            <BigCaretLine>文字<Caret w={5} /></BigCaretLine>
                        </BigButton>
                        <ToolColumn>
                            <TextTool><Icon name="linear" />线性<Caret w={5} /></TextTool>
                            <TextTool><Icon name="leader" />多重引线<Caret w={5} /></TextTool>
                            <TextTool><Icon name="table" />表格</TextTool>
                        </ToolColumn>
                    </Panel>

                    <Panel title="图层" width={206}>
                        <FieldColumn>
                            <LayerRow>
                                <Tool icon="layerProps" label="图层特性" />
                                <Tool icon="layerMatch" label="置为当前图层" />
                                <ToolPair items={[['layerBrush', '匹配'], ['layerPrev', '上一个']]} />
                                <ToolPair items={[['layerIso', '隔离'], ['layerUniso', '取消隔离']]} />
                                <ToolPair items={[['layerFreeze', '冻结'], ['layerOff', '关闭']]} />
                            </LayerRow>
                            <Combo label="图层状态" value="未保存的图层状态" />
                            <Combo label="图层" value="尺寸和文字">
                                <LayerFlags>
                                    <Icon name="bulb" />
                                    <Icon name="sun" />
                                    <Icon name="unlock" />
                                </LayerFlags>
                                <Swatch />
                            </Combo>
                        </FieldColumn>
                    </Panel>

                    <Panel title="块" width={136}>
                        <BigButton $width={48}><BigIcon><Icon name="insert" w={30} /></BigIcon>插入</BigButton>
                        <ToolColumn>
                            <TextTool><Icon name="create" />创建</TextTool>
                            <TextTool><Icon name="edit" />编辑</TextTool>
                            <TextTool><Icon name="editAttr" />编辑属性<Caret w={5} /></TextTool>
                        </ToolColumn>
                    </Panel>

                    <Panel title="特性" width={205} launcher>
                        <FieldColumn>
                            <PropRow>
                                <Icon name="wheel" />
                                <Combo label="对象颜色" value="ByLayer"><Swatch /></Combo>
                            </PropRow>
                            <PropRow>
                                <Icon name="lweight" />
                                <Combo label="线宽" value="ByLayer"><LineSample $weight={2} $color="#000" /></Combo>
                            </PropRow>
                            <PropRow>
                                <Icon name="ltype" />
                                <Combo label="线型" value="ByLayer"><LineSample $weight={1} $color="#777" /></Combo>
                            </PropRow>
                        </FieldColumn>
                    </Panel>

                    <Panel title="实用工具" width={74}>
                        <BigButton $width={48}><BigIcon><Icon name="measure" w={31} h={22} /></BigIcon>测量<BigCaret><Caret w={5} /></BigCaret></BigButton>
                        <ToolColumn>
                            <Tool icon="quickSelect" label="快速选择" />
                            <Tool icon="selectAll" label="全部选择" />
                            <Tool icon="calc" label="快速计算器" />
                        </ToolColumn>
                    </Panel>

                    <Panel title="剪贴板" width={73} plain>
                        <BigButton $width={48}><BigIcon><Icon name="paste" w={30} /></BigIcon>粘贴<BigCaret><Caret w={5} /></BigCaret></BigButton>
                        <ToolColumn>
                            <Tool icon="cut" label="剪切" />
                            <Tool icon="copyClip" label="复制到剪贴板" />
                            <Tool icon="matchProp" label="特性匹配" />
                        </ToolColumn>
                    </Panel>
                </Ribbon>

                <Workspace>
                    <SnapBar>
                        <SnapGrip>
                            <svg width="14" height="4" viewBox="0 0 14 4" aria-hidden="true"><path d="M0 .5h14M0 2.500h14" stroke="#111" strokeDasharray="1 1" /></svg>
                        </SnapGrip>
                        {snapGroups.map((group, i) => (
                            <SnapGroup key={i}>
                                {group.map(([icon, label]) => (
                                    <SnapButton key={icon} aria-label={label} $marked={icon === 'snapPar'}>
                                        <Icon name={icon} />
                                    </SnapButton>
                                ))}
                            </SnapGroup>
                        ))}
                    </SnapBar>

                    <Tooltip role="tooltip">
                        <TipPart>
                            <strong>捕捉到平行线</strong>
                            <p>捕捉到指定直线的平行线</p>
                        </TipPart>
                        <TipPart>
                            <TipCommand><Icon name="par" />PAR</TipCommand>
                            <strong>按 F1 键获得更多帮助</strong>
                        </TipPart>
                    </Tooltip>

                    <DrawingFrame>
                        <Canvas>
                            <Drawing />
                            <LengthField>
                                <input aria-label="长度" defaultValue="94.7762" />
                            </LengthField>
                            <CursorTip $x={737} $y={268} $width={27}>6°</CursorTip>
                            <CursorTip $x={764} $y={270} $width={120}>平行: 94.7762 &lt; 6°</CursorTip>
                        </Canvas>
                        <LayoutBar>
                            <NavButton aria-label="第一个"><svg width="8" height="9"><path d="M1 0v9M8 0v9L2 4.500z" fill="#555" stroke="#555" strokeWidth=".5" /></svg></NavButton>
                            <NavButton aria-label="上一个"><svg width="6" height="9"><path d="M6 0v9L0 4.500z" fill="#555" /></svg></NavButton>
                            <NavButton aria-label="下一个"><svg width="6" height="9"><path d="M0 0v9l6-4.500z" fill="#555" /></svg></NavButton>
                            <NavButton aria-label="最后一个"><svg width="8" height="9"><path d="M7 0v9M0 0v9l6-4.500z" fill="#555" stroke="#555" strokeWidth=".5" /></svg></NavButton>
                            <ModelTab>模型</ModelTab>
                            <LayoutTab>布局1</LayoutTab>
                            <LayoutTab>布局2</LayoutTab>
                        </LayoutBar>
                    </DrawingFrame>
                </Workspace>

                <CommandWindow>
                    <CommandGrip>
                        <svg width="12" height="4" viewBox="0 0 12 4" aria-hidden="true"><path d="M0 .5h12M0 2.500h12" stroke="#222" strokeDasharray="1 1" /></svg>
                    </CommandGrip>
                    <CommandMain>
                        <History>
                            <HistoryLines>
                                <ConsoleText text="命令:" />
                                <ConsoleText text="命令: _line 指定第一点:" />
                            </HistoryLines>
                            <VScroll>
                                <button aria-label="向上滚动"><svg width="8" height="6"><path d="M0 5l4-4 4 4" fill="none" stroke="#555" strokeWidth="2" /></svg></button>
                                <button aria-label="向下滚动"><svg width="8" height="6"><path d="M0 1l4 4 4-4" fill="none" stroke="#555" strokeWidth="2" /></svg></button>
                            </VScroll>
                        </History>
                        <Prompt>
                            <ConsoleText text="指定下一点或 [放弃(U)]: _par 到" />
                            <HScroll>
                                <button aria-label="向左滚动"><svg width="6" height="8"><path d="M5 0L1 4l4 4" fill="none" stroke="#555" strokeWidth="2" /></svg></button>
                                <ScrollThumb />
                                <button aria-label="向右滚动"><svg width="6" height="8"><path d="M1 0l4 4-4 4" fill="none" stroke="#555" strokeWidth="2" /></svg></button>
                            </HScroll>
                        </Prompt>
                    </CommandMain>
                </CommandWindow>

                <StatusBar>
                    <Coordinates>{'94.7762<  6       , 0.0000'}</Coordinates>
                    <StatusGroup>
                        {modes.map(([icon, label, on]) => (
                            <StatusButton key={icon} aria-label={label} aria-pressed={on} $on={on}><Icon name={icon} /></StatusButton>
                        ))}
                    </StatusGroup>
                    <StatusSpace />
                    <StatusGroup>
                        <StatusButton $text>模型</StatusButton>
                        <StatusButton aria-label="快速查看布局"><Icon name="layout" /></StatusButton>
                        <StatusButton aria-label="快速查看图形"><Icon name="views" /></StatusButton>
                    </StatusGroup>
                    <StatusGap $width={17} />
                    <StatusGroup>
                        <StatusButton aria-label="平移"><Icon name="pan" /></StatusButton>
                        <StatusButton aria-label="缩放"><Icon name="zoom" /></StatusButton>
                        <StatusButton aria-label="SteeringWheel"><Icon name="steer" /></StatusButton>
                        <StatusButton aria-label="ShowMotion"><Icon name="motion" /></StatusButton>
                    </StatusGroup>
                    <StatusGap $width={17} />
                    <StatusGroup>
                        <StatusButton $text><Icon name="anno" /><Ratio>1:1</Ratio><Caret w={8} color="#000" /></StatusButton>
                        <StatusButton aria-label="注释可见性"><Icon name="annoSun" /></StatusButton>
                        <StatusButton aria-label="自动添加比例"><Icon name="annoAuto" /></StatusButton>
                    </StatusGroup>
                    <StatusGap $width={5} />
                    <StatusGroup>
                        <StatusButton $text><Icon name="gear" />初始设置工作空间<Caret w={8} color="#000" /></StatusButton>
                        <StatusButton aria-label="工具栏锁定"><Icon name="padlock" /></StatusButton>
                    </StatusGroup>
                    <StatusGap $width={3} />
                    <StatusGroup>
                        <StatusButton $slim aria-label="状态栏菜单"><Caret w={6} color="#000" /></StatusButton>
                        <StatusButton aria-label="全屏显示"><Icon name="clean" /></StatusButton>
                    </StatusGroup>
                </StatusBar>
            </Window>
        </ThemeProvider>
    )
}

export default App

const Window = styled.div`
    min-height: 100vh;
    display: flex;
    flex-direction: column;
    background: ${props => props.theme.frame};
`;

const Header = styled.header`
    display: flex;
    height: 46px;
    background: #686868;
    border-bottom: 1px solid #000;
`;

const AppButton = styled.button`
    width: 41px;
    height: 41px;
    display: flex;
    align-items: center;
    justify-content: center;
    gap: 3px;
    border: 1px solid #222;
    background: linear-gradient(#c4c4c4, #6e6e6e);
`;

const HeaderRows = styled.div`
    flex: 1;
    min-width: 0;
`;

const TitleBar = styled.div`
    height: 25px;
    display: flex;
    background: #ebebeb;
    border-bottom: 1px solid #2a2a2a;
`;

const BarGroup = styled.div`
    display: flex;
    align-items: center;
    border: 1px solid #2a2a2a;
    border-bottom: 0;
    background: linear-gradient(#a6a6a6, #7e7e7e);
`;

const QuickAccess = styled(BarGroup)`
    padding-left: 4px;
`;

const BarButton = styled.button`
    width: 23px;
    height: 23px;
    display: flex;
    align-items: center;
    justify-content: center;
    background: ${props => props.$pale ? '#c6c6c6' : 'none'};
`;

const SlimButton = styled(BarButton)`
    width: 9px;
`;

const EndButton = styled(BarButton)`
    width: 13px;
`;

const Caption = styled.div`
    flex: 1;
    display: flex;
    justify-content: center;
    gap: 24px;
    padding-left: 22px;
    font-size: 16px;
    line-height: 24px;
    color: #111;
    white-space: nowrap;
`;

const InfoCenter = styled(BarGroup)`
`;

const SearchInput = styled.input`
    width: 179px;
    height: 21px;
    padding: 0 4px;
    background: #f8f8f8;
    border-bottom: 1px solid #bbb;
    font-style: italic;

    &::placeholder {
        color: #707070;
        opacity: 1;
    }
`;

const WindowButtons = styled.div`
    display: flex;
    align-items: flex-start;
    gap: 2px;
    padding: 0 3px 0 23px;
`;

const WindowButton = styled.button`
    width: ${props => props.$close ? 45 : 24}px;
    height: 19px;
    display: flex;
    align-items: center;
    justify-content: center;
    background: ${props => props.$close ? '#bcbcbc' : 'none'};
`;

const MenuBar = styled.nav`
    height: 20px;
    display: flex;
    align-items: center;
    padding-right: 4px;
    background: linear-gradient(#a2a2a2, #5a5a5a);
`;

const MenuItem = styled.button`
    padding: 0 12px 0 13px;
    color: #fff;
    white-space: nowrap;
`;

const DocButtons = styled.div`
    margin-left: auto;
    display: flex;
    gap: 5px;
`;

const TabStrip = styled.div`
    height: 19px;
    display: flex;
    align-items: flex-end;
    padding-left: 3px;
    background: #404040;
`;

const RibbonTab = styled.button`
    height: 17px;
    padding: 0 10px 1px;
    font-weight: ${props => props.$active ? 400 : 600};
    white-space: nowrap;
    color: ${props => props.$active ? '#222' : '#fff'};
    background: ${props => props.$active ? 'linear-gradient(#fff, #e4e4e4)' : 'none'};
`;

const RibbonToggle = styled.button`
    width: 14px;
    height: 8px;
    margin: 0 0 5px 21px;
    display: flex;
    align-items: center;
    justify-content: center;
    border-radius: 2px;
    background: #dfe2ea;
`;

const Ribbon = styled.div`
    height: 99px;
    display: flex;
    padding-left: 2px;
    border-top: 1px solid #fff;
    border-bottom: 1px solid #fff;
    background: linear-gradient(#cdcdcd, #929292);
`;

const PanelBox = styled.section`
    width: ${props => props.$width}px;
    flex: none;
    display: flex;
    flex-direction: column;
    border-right: 1px solid #a4a4a4;
    background: linear-gradient(#e2e2e2, #fafafa 30%, #fff);

    &:last-child {
        border-right: 0;
    }
`;

const PanelBody = styled.div`
    flex: 1;
    display: flex;
    gap: 4px;
    padding: 4px 2px 0 1px;
`;

const PanelTitle = styled.div`
    position: relative;
    height: 20px;
    display: flex;
    align-items: center;
    justify-content: center;
    gap: 7px;
    padding-bottom: 1px;
    border-top: 1px solid #d4d4d4;
    background: linear-gradient(#e6e6e6, #f4f4f4);
    white-space: nowrap;
`;

const Launcher = styled.button`
    position: absolute;
    right: 4px;
    bottom: 5px;
`;

const BigButton = styled.button`
    width: ${props => props.$width}px;
    margin-right: -4px;
    display: flex;
    flex-direction: column;
    align-items: center;
    justify-content: flex-start;
    line-height: 14px;
`;

const BigIcon = styled.span`
    height: 36px;
    margin-bottom: 2px;
    display: flex;
    align-items: center;
`;

const BigCaretLine = styled.span`
    display: flex;
    align-items: center;
    gap: 4px;
    padding-left: 9px;
`;

const BigCaret = styled.span`
    padding-top: 3px;
`;

const ToolColumn = styled.div`
    display: flex;
    flex-direction: column;
    gap: 2px;
`;

const ToolBox = styled.div`
    height: 22px;
    display: flex;
    border: 1px solid #cdcdcd;
    background: #fbfbfb;
`;

const ToolButton = styled.button`
    width: ${props => props.$joined ? 23 : 20}px;
    display: flex;
    align-items: center;
    justify-content: center;

    & + & {
        border-left: 1px solid #dcdcdc;
    }
`;

const SplitButton = styled.button`
    width: 11px;
    display: flex;
    align-items: center;
    justify-content: center;
    border-left: 1px solid #cdcdcd;
`;

const TextTool = styled.button`
    height: 22px;
    display: flex;
    align-items: center;
    gap: 3px;
    white-space: nowrap;

    & > svg:last-child {
        margin-left: 5px;
    }
`;

const FieldColumn = styled(ToolColumn)`
    flex: 1;
    min-width: 0;
    padding-left: 1px;
`;

const LayerRow = styled.div`
    display: flex;
    justify-content: space-between;
`;

const ComboBox = styled.div`
    flex: 1;
    min-width: 0;
    height: 22px;
    max-height: 22px;
    display: flex;
    align-items: center;
    gap: 2px;
    padding: 0 2px;
    border: 1px solid #cdcdcd;
    background: #fbfbfb;
`;

const ComboSelect = styled.select`
    flex: 1;
    min-width: 0;
    appearance: none;
    outline: 0;
`;

const LayerFlags = styled.span`
    display: flex;
    gap: 3px;
    margin-right: 3px;
`;

const Swatch = styled.span`
    width: 16px;
    height: 16px;
    flex: none;
    border: 1px solid #000;
    background: ${props => props.theme.cyan};
`;

const LineSample = styled.span`
    width: 64px;
    flex: none;
    margin-left: 1px;
    border-top: ${props => props.$weight}px solid ${props => props.$color};
`;

const PropRow = styled.div`
    display: flex;
    align-items: center;
    gap: 3px;
`;

const Workspace = styled.main`
    position: relative;
    flex: 1;
    display: flex;
    align-items: flex-start;
    gap: 4px;
    padding: 5px 2px 0 0;
`;

const SnapBar = styled.aside`
    width: 25px;
    border: 1px solid #3c3c3c;
    background: #ebebeb;
`;

const SnapGrip = styled.div`
    height: 8px;
    padding: 2px 0 0 3px;
    background: #5c5c5c;
`;

const SnapGroup = styled.div`
    & + & {
        padding-top: 5px;
        border-top: 1px solid #9a9a9a;
    }
`;

const SnapButton = styled.button`
    position: relative;
    width: 100%;
    height: 22px;
    display: flex;
    align-items: center;
    padding-left: 3px;

    ${props => props.$marked && css`
        &::after {
            content: "";
            position: absolute;
            top: 0;
            left: 1px;
            width: 28px;
            height: 23px;
            border: 1px solid #f01c24;
            z-index: 2;
        }
    `}
`;

const Tooltip = styled.div`
    position: absolute;
    top: 295px;
    left: 29px;
    z-index: 3;
    width: 148px;
    border: 1px solid #777;
    border-radius: 2px;
    background: linear-gradient(#fff, #e6e6f0);
    color: #555;
    white-space: nowrap;
`;

const TipPart = styled.div`
    padding: 6px 6px 5px;

    & + & {
        border-top: 1px solid #aaa;
        padding-bottom: 4px;
    }

    strong {
        display: block;
        padding-bottom: 3px;
        font-size: 12px;
        line-height: 18px;
    }

    p {
        margin: 0;
        line-height: 18px;
    }
`;

const TipCommand = styled.div`
    display: flex;
    align-items: center;
    gap: 5px;
    padding-bottom: 7px;
    font-weight: 700;
`;

const DrawingFrame = styled.div`
    align-self: stretch;
    flex: 1;
    min-width: 0;
    display: flex;
    flex-direction: column;
    border-top: 2px solid #9a9a9a;
    border-left: 2px solid #9a9a9a;
    border-bottom: 2px solid #f4f4f4;
`;

const Canvas = styled.div`
    position: relative;
    flex: 1;
    min-height: 580px;
    overflow: hidden;
    background: #000;
`;

const DrawingSvg = styled.svg`
    position: absolute;
    inset: 0;
    width: 100%;
    height: 100%;
`;

const DimText = styled.text`
    fill: ${props => props.theme.cyan};
    font-family: Lato, sans-serif;
    font-size: 16px;
    font-weight: 300;
    font-style: italic;
`;

const AxisText = styled.text`
    fill: #fff;
    font-family: "DejaVu Sans", sans-serif;
    font-weight: 200;
    font-size: 20px;
`;

const LengthField = styled.label`
    position: absolute;
    top: 218px;
    left: 492px;
    width: 60px;
    height: 22px;
    padding: 1px 3px;
    border: 1px solid ${props => props.theme.tipLine};
    background: #fff;

    input {
        display: block;
        width: 46px;
        height: 18px;
        background: #3399ff;
        color: #fff;
    }
`;

const CursorTip = styled.span`
    position: absolute;
    left: ${props => props.$x}px;
    top: ${props => props.$y}px;
    width: ${props => props.$width}px;
    height: 22px;
    padding-left: 3px;
    border: 1px solid ${props => props.theme.tipLine};
    background: ${props => props.theme.tip};
    color: #dcd890;
    line-height: 20px;
    white-space: nowrap;
`;

const LayoutBar = styled.div`
    height: 15px;
    display: flex;
    background: #f0f0f0;
    color: #000;
    line-height: 15px;
`;

const NavButton = styled.button`
    width: 14px;
    display: flex;
    align-items: center;
    justify-content: center;
    border-right: 1px solid #aaa;
`;

const ModelTab = styled.button`
    width: 46px;
    background: #000;
    color: #fff;
    clip-path: polygon(0 0, 100% 0, 41px 100%, 5px 100%);
    line-height: 15px;
`;

const LayoutTab = styled.button`
    position: relative;
    width: 46px;
    padding-right: 6px;
    line-height: 15px;

    &::after {
        content: "";
        position: absolute;
        top: 0;
        right: 2px;
        height: 100%;
        border-right: 1px solid #555;
        transform: skewX(-22deg);
    }
`;

const CommandWindow = styled.section`
    display: flex;
    margin-top: 4px;
    height: 58px;
    background: #fff;
`;

const CommandGrip = styled.div`
    width: 16px;
    margin-right: 1px;
    padding: 3px 0 0 2px;
    border-radius: 0 4px 0 0;
    background: #9c9c9c;
`;

const CommandMain = styled.div`
    flex: 1;
    min-width: 0;
`;

const History = styled.div`
    height: 40px;
    display: flex;
    justify-content: space-between;
    border-bottom: 1px solid #9c9c9c;
`;

const HistoryLines = styled.div`
    overflow: hidden;
`;

const ConsoleLine = styled.div`
    padding-left: 1px;
    font-family: ${props => props.theme.mono};
    font-size: 16px;
    line-height: 16px;
    color: #000;
    white-space: pre;
`;

const Half = styled.span`
    font-size: 13px;
`;

const Scroll = styled.div`
    display: flex;
    align-items: center;
    justify-content: space-around;
    background: #f0f0f0;
`;

const VScroll = styled(Scroll)`
    width: 16px;
    flex-direction: column;
`;

const HScroll = styled(Scroll)`
    width: 69px;
    height: 17px;
    margin-right: 17px;
    justify-content: flex-start;
    gap: 6px;
    padding: 0 6px;

    & > :last-child {
        margin-left: auto;
    }
`;

const ScrollThumb = styled.span`
    width: 17px;
    height: 17px;
    background: #cdcdcd;
`;

const Prompt = styled.div`
    display: flex;
    align-items: flex-end;
    justify-content: space-between;
    height: 18px;
`;

const StatusBar = styled.footer`
    height: 23px;
    display: flex;
    align-items: stretch;
    border-top: 1px solid #111;
    border-bottom: 1px solid #4a7088;
    background: linear-gradient(#6c6c6c, #9a9a9a);
    color: #000;
`;

const Coordinates = styled.output`
    width: 211px;
    padding-left: 11px;
    font-family: "DejaVu Sans Mono", monospace;
    font-size: 10px;
    line-height: 24px;
    white-space: pre;
`;

const StatusGroup = styled.div`
    display: flex;
    border-left: 1px solid #333;
`;

const StatusButton = styled.button`
    min-width: ${props => props.$slim ? 13 : 22}px;
    padding: 0 ${props => props.$text ? 3 : 2}px;
    display: flex;
    align-items: center;
    justify-content: center;
    gap: 2px;
    border-right: 1px solid #555;
    background: ${props => props.$on ? 'linear-gradient(#c8e4ee, #86c4d8)' : 'linear-gradient(#c4c4c4, #9c9c9c)'};
    white-space: nowrap;
`;

const Ratio = styled.span`
    font-family: "DejaVu Sans Mono", monospace;
    font-size: 10px;
`;

const StatusSpace = styled.div`
    flex: 1;
`;

const StatusGap = styled.div`
    width: ${props => props.$width}px;
`;
